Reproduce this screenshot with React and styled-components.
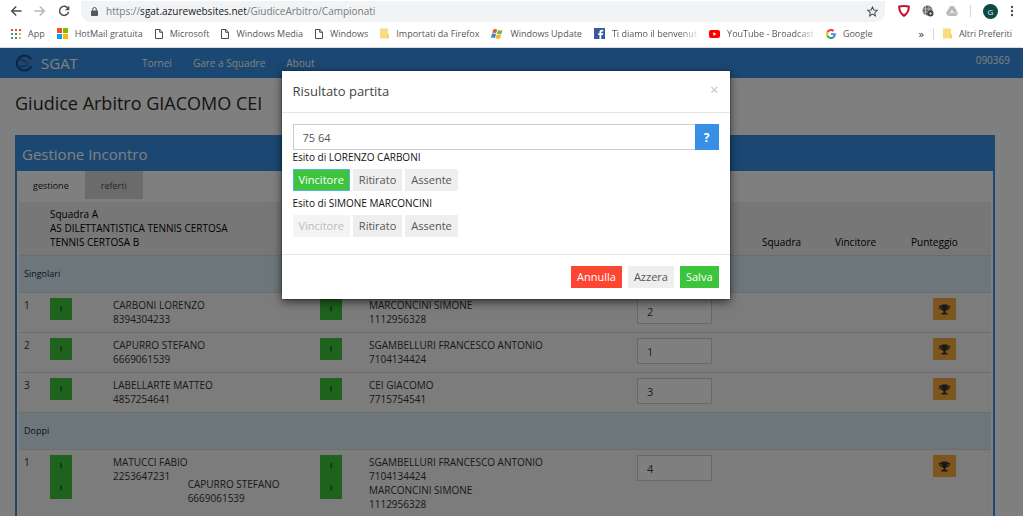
import React from "react";
import styled, { createGlobalStyle } from "styled-components";
import { FaTrophy } from "react-icons/fa";

const Global = createGlobalStyle`
  *, *::before, *::after { box-sizing: border-box; }
  html, body { margin: 0; height: 100%; }
  #root { height: 100%; }
  body, button, input, table { font-family: "Open Sans", "Noto Sans", sans-serif; }
  body { background: #fff; overflow: hidden; }
  button { margin: 0; padding: 0; border: 0; }
  a { color: inherit; text-decoration: none; }
`;

const BLUE = "#378fe6";
const GREEN = "#3cc43c";

const Browser = styled.div`
  display: flex;
  flex-direction: column;
  height: 100%;
`;

/* ---------- browser chrome ---------- */
const Toolbar = styled.div`
  display: flex;
  align-items: center;
  height: 22px;
  padding: 0 9px 0 10px;
`;
const NavButtons = styled.div`
  display: flex;
  gap: 12px;
  width: 71px;
`;
const ToolButton = styled.button`
  display: flex;
  background: none;
`;
const AddressBar = styled.div`
  flex: 1;
  display: flex;
  align-items: center;
  gap: 8px;
  height: 21px;
  padding: 0 7px 0 10px;
  border-radius: 0 0 10px 10px;
  background: #f1f3f4;
`;
const UrlText = styled.span`
  flex: 1;
  font-size: 10px;
  line-height: 16px;
  color: #777b80;
  b { font-weight: 400; color: #202124; }
`;
const Extensions = styled.div`
  display: flex;
  align-items: center;
  gap: 12px;
  padding-left: 13px;
`;
const Divider = styled.span`
  width: 1px;
  height: 12px;
  background: #d6d6d6;
`;
const Avatar = styled.button`
  width: 15px;
  height: 15px;
  border-radius: 50%;
  background: #0b4a45;
  color: #e6f2f0;
  font-size: 8px;
  line-height: 15px;
`;
const Bookmarks = styled.nav`
  display: flex;
  align-items: center;
  height: 26px;
  padding: 0 11px 2px;
  gap: 12px;
  border-bottom: 1px solid #dcdcdc;
`;
const Bookmark = styled.a`
  display: flex;
  align-items: center;
  gap: 7px;
  flex: none;
  font-size: 9px;
  line-height: 14px;
  color: #55585c;
  white-space: nowrap;
`;
const FadedLabel = styled.span`
  mask-image: linear-gradient(to right, #000 80%, rgba(0, 0, 0, 0.2));
`;
const BookmarksEnd = styled.div`
  display: flex;
  align-items: center;
  gap: 9px;
  margin-left: auto;
`;
const More = styled.button`
  background: none;
  font-size: 11px;
  line-height: 14px;
  color: #444;
`;

/* ---------- page ---------- */
const Viewport = styled.div`
  position: relative;
  flex: 1;
  min-height: 0;
  overflow: hidden;
`;
const SiteNav = styled.nav`
  display: flex;
  align-items: center;
  height: 30px;
  padding: 0 13px 0 15px;
  background: ${BLUE};
  color: #fff;
  font-size: 10px;
`;
const Brand = styled.a`
  display: flex;
  align-items: center;
  gap: 4px;
  width: 127px;
  font-size: 15px;
`;
const NavLinks = styled.div`
  flex: 1;
  display: flex;
  gap: 21px;
`;
const UserCode = styled.a`
  padding-bottom: 6px;
`;
const Content = styled.main`
  padding: 0 28px 0 15px;
`;
const PageTitle = styled.h1`
  margin: 0;
  padding: 12px 0 19px;
  font-size: 18px;
  line-height: 26px;
  font-weight: 400;
  color: #2a2a2a;
`;
const Panel = styled.section`
  border: 2px solid ${BLUE};
`;
const PanelTitle = styled.h2`
  margin: 0;
  padding: 0 5px;
  background: ${BLUE};
  color: #fff;
  font-size: 15px;
  line-height: 34px;
  font-weight: 400;
`;
const Tabs = styled.div`
  display: flex;
  margin-bottom: 3px;
`;
const Tab = styled.button`
  height: 28px;
  padding: 0 16px;
  font-size: 9px;
  color: ${(p) => (p.$active ? "#222" : "#555")};
  background: ${(p) => (p.$active ? "#fff" : "#d6d6d6")};
`;
const TableWrap = styled.div`
  padding: 0 2px;
`;
const Table = styled.table`
  width: 100%;
  table-layout: fixed;
  border-collapse: collapse;
  font-size: 10px;
  line-height: 14px;
  color: #333;
`;
const Col = styled.col`
  width: ${(p) => (p.$w ? `${p.$w}px` : "auto")};
`;
const HeadRow = styled.tr`
  height: 53px;
  background: #efefef;
`;
const Th = styled.th`
  padding: 5px 5px 6px;
  text-align: ${(p) => (p.$end ? "right" : "left")};
  padding-right: ${(p) => (p.$end ? 34 : 0)}px;
  vertical-align: bottom;
  font-weight: 500;
  color: #000;
  white-space: nowrap;
`;
const SectionRow = styled.tr`
  height: 37px;
  background: #d9edf7;
  border-top: 1px solid #d8d8d8;
`;
const SectionCell = styled.th`
  padding: 0 5px;
  text-align: left;
  font-size: 9px;
  font-weight: 400;
  color: #0c2c48;
`;
const Row = styled.tr`
  height: ${(p) => (p.$double ? 67 : 40)}px;
  background: #f8f8f8;
  border-top: 1px solid #dadada;
  border-bottom: 1px solid #dadada;
`;
const Td = styled.td`
  padding: 5px 0 0 5px;
  vertical-align: top;
  text-align: ${(p) => (p.$end ? "right" : "left")};
  padding-right: ${(p) => (p.$end ? 35 : 0)}px;
  white-space: nowrap;
`;
const SquareButton = styled.button`
  display: flex;
  align-items: center;
  justify-content: center;
  width: ${(p) => (p.$wide ? 23 : 22)}px;
  height: 22px;
  background: ${(p) => p.$color};
  color: #333;
`;
const EndAlign = styled.div`
  display: flex;
  justify-content: flex-end;
`;
const Players = styled.div`
  display: flex;
  flex-direction: ${(p) => (p.$stacked ? "column" : "row")};
`;
const Player = styled.div`
  margin-top: ${(p) => (p.$dropped ? 22 : 0)}px;
`;
const ScoreInput = styled.input`
  display: block;
  width: 75px;
  height: 26px;
  padding: 0 9px;
  border: 1px solid #d0d0d0;
  background: #fff;
  font-size: 11px;
  color: #444;
`;

/* ---------- dialog ---------- */
const Overlay = styled.div`
  position: absolute;
  inset: 0;
  display: flex;
  justify-content: center;
  align-items: flex-start;
  padding: 23px 12px 0 0;
  background: rgba(0, 0, 0, 0.5);
`;
const Dialog = styled.div`
  width: 448px;
  background: #fff;
  box-shadow: 0 3px 9px rgba(0, 0, 0, 0.6), 0 0 1px #000;
  color: #444;
`;
const DialogHeader = styled.header`
  display: flex;
  justify-content: space-between;
  align-items: flex-start;
  padding: 11px;
  border-bottom: 1px solid #e5e5e5;
`;
const DialogTitle = styled.h3`
  margin: 0;
  font-size: 13px;
  line-height: 19px;
  font-weight: 400;
`;
const Close = styled.button`
  background: none;
  color: #c4c4c4;
  font-size: 15px;
  line-height: 14px;
`;
const DialogBody = styled.div`
  padding: 11px 11px 12px;
`;
const InputGroup = styled.div`
  display: flex;
  height: 26px;
`;
const ResultInput = styled.input`
  flex: 1;
  min-width: 0;
  padding: 0 9px;
  border: 1px solid #ccc;
  border-right: 0;
  font-size: 11px;
  color: #555;
`;
const HelpButton = styled.button`
  width: 24px;
  background: ${BLUE};
  color: #fff;
  font-size: 12px;
  font-weight: 700;
`;
const Outcome = styled.fieldset`
  margin: 0 0 5px;
  padding: 0;
  border: 0;
`;
const OutcomeLabel = styled.legend`
  padding: 0 0 5px;
  font-size: 10px;
  line-height: 14px;
  font-weight: 500;
  color: #111;
`;
const Options = styled.div`
  display: flex;
  gap: 3px;
`;
const tones = {
  plain: ["#eeeeee", "#555"],
  success: [GREEN, "#fff"],
  danger: ["#fd4533", "#fff"],
};
const Button = styled.button`
  height: 22px;
  padding: 0 6px;
  font-size: 11px;
  line-height: 22px;
  background: ${(p) => tones[p.$tone || "plain"][0]};
  color: ${(p) => tones[p.$tone || "plain"][1]};
  box-shadow: ${(p) => (p.$focused ? "inset 0 0 0 1px #57b6d6" : "none")};
  &:disabled { background: #f4f4f4; color: #bbb; }
`;
const DialogFooter = styled.footer`
  display: flex;
  justify-content: flex-end;
  gap: 6px;
  padding: 11px;
  border-top: 1px solid #e5e5e5;
`;

/* ---------- icons ---------- */
const Icon = styled.svg`
  flex: none;
`;
const Svg = ({ w = 12, h = w, box = `0 0 ${w} ${h}`, children }) => (
  <Icon width={w} height={h} viewBox={box} aria-hidden="true">{children}</Icon>
);
const stroke = { fill: "none", stroke: "#4a4d51", strokeWidth: 1.5 };
const BackIcon = () => <Svg><path d="M11.5 6H2M6.2 1.5 1.7 6l4.5 4.5" {...stroke} /></Svg>;
const ForwardIcon = () => <Svg><path d="M.5 6H10M5.8 1.5 10.3 6l-4.5 4.5" {...stroke} stroke="#b5b7ba" /></Svg>;
const ReloadIcon = () => (
  <Svg><path d="M10 3.3A4.6 4.6 0 1 0 10.6 7" {...stroke} /><path d="M11.3.8v4.4H6.9z" fill="#4a4d51" /></Svg>
);
const LockIcon = () => (
  <Svg w={7} h={9}><rect y="3.5" width="7" height="5.5" rx=".7" fill="#55585c" /><path d="M1.7 4V2.3a1.8 1.8 0 0 1 3.6 0V4" {...stroke} strokeWidth="1" /></Svg>
);
const StarIcon = () => (
  <Svg w={11} box="0 0 12 12"><path d="m6 1 1.5 3.4 3.7.3-2.8 2.5.8 3.6L6 8.9l-3.2 1.9.8-3.6L.8 4.7l3.7-.3z" {...stroke} strokeWidth="1.1" /></Svg>
);
const ShieldIcon = () => (
  <Svg><path d="M1.200 1.600Q6 .6 10.800 1.600Q11 7.500 6 10.800Q1 7.500 1.200 1.600z" fill="#fff" stroke="#c5122c" strokeWidth="2" /></Svg>
);
const GlobeIcon = () => (
  <Svg>
    <circle cx="5.500" cy="5.500" r="5" fill="#666" />
    <path d="M1 4h9M1 7h9M3.500 1v9M7 1v9" stroke="#ccc" strokeWidth=".7" />
    <circle cx="8.500" cy="8.500" r="3" fill="#444" /><path d="M7 8.500h3M8.500 7v3" stroke="#ddd" strokeWidth=".7" />
  </Svg>
);
const DriveIcon = () => (
  <Svg><path d="M4.200 1h3.600L12 8l-1.800 3H1.800L0 8z" fill="#b9b9b9" /><path d="m6 4.500 1.800 3.200H4.200z" fill="#f4f4f4" /><path d="M1.800 11 4 7.800h8" stroke="#ddd" fill="none" strokeWidth=".8" /></Svg>
);
const DotsIcon = () => (
  <Svg w={4} h={12}><g fill="#4a4d51"><circle cx="2" cy="2" r="1.200" /><circle cx="2" cy="6" r="1.200" /><circle cx="2" cy="10" r="1.200" /></g></Svg>
);
const AppsIcon = () => (
  <Svg w={10}>
    {["#e2483d", "#e2483d", "#e2483d", "#45a25a", "#4b7fd8", "#e8b52e", "#45a25a", "#45a25a", "#e8b52e"].map((c, i) => (
      <rect key={i} x={(i % 3) * 4} y={Math.floor(i / 3) * 4} width="2" height="2" fill={c} />
    ))}
  </Svg>
);
const TilesIcon = () => (
  <Svg w={11}><rect width="5" height="5" fill="#f25022" /><rect x="6" width="5" height="5" fill="#7fba00" /><rect y="6" width="5" height="5" fill="#00a4ef" /><rect x="6" y="6" width="5" height="5" fill="#ffb900" /></Svg>
);
const PageIcon = () => (
  <Svg w={8} h={10}><path d="M.5.500h4.300l2.700 2.700v6.300h-7zM4.700.500v2.800h2.800" {...stroke} strokeWidth="1" /></Svg>
);
const FolderIcon = () => (
  <Svg w={9} h={11}><path d="M0 .5h8V6L9 7v3.500H0z" fill="#f9dc7c" /><path d="M8 6v4.500" stroke="#e6c25a" strokeWidth=".7" /></Svg>
);
const WindowsFlagIcon = () => (
  <Svg>
    <path d="M2.200 1.500C3.600.700 5 .800 6.200 1.500L5.200 5.300C4 4.700 2.700 4.600 1.200 5.300z" fill="#e2592b" />
    <path d="M7 1.900c1.400.800 2.800.800 4.500 0l-1 3.800c-1.600.800-3 .700-4.500 0z" fill="#7db23a" />
    <path d="M1 6.100C2.400 5.400 3.700 5.500 5 6.100L4 9.900C2.700 9.200 1.400 9.200 0 9.900z" fill="#3b82c9" />
    <path d="M5.700 6.500c1.500.800 2.900.800 4.500 0l-1 3.800c-1.600.800-3 .800-4.500 0z" fill="#f2b92c" />
  </Svg>
);
const FacebookIcon = () => (
  <Svg w={11}><rect width="11" height="11" fill="#3b5998" /><path d="M7.300 11V6.900H9l.2-1.700H7.300V4.300c0-.6.300-.9 1-.9h1V1.800H7.900C6.200 1.800 5.500 2.700 5.500 4v1.200H4.200v1.700h1.300V11z" fill="#fff" /></Svg>
);
const YoutubeIcon = () => (
  <Svg w={11} h={8}><rect width="11" height="8" rx="2" fill="#f00" /><path d="m4.300 2.200 3.200 1.800-3.200 1.800z" fill="#fff" /></Svg>
);
const GoogleIcon = () => (
  <Svg w={10} box="0 0 48 48">
    <path fill="#EA4335" d="M24 9.500c3.500 0 6.700 1.200 9.200 3.600l6.900-6.900C35.900 2.400 30.500 0 24 0 14.600 0 6.500 5.400 2.600 13.200l8 6.200C12.400 13.700 17.700 9.500 24 9.500z" />
    <path fill="#4285F4" d="M47 24.600c0-1.600-.2-3.100-.4-4.600H24v9h12.900c-.6 3-2.200 5.500-4.700 7.200l7.700 6C44.400 38 47 31.800 47 24.600z" />
    <path fill="#FBBC05" d="M10.500 28.600c-.5-1.500-.8-3-.8-4.600s.3-3.100.8-4.600l-8-6.200C.9 16.500 0 20.100 0 24s.9 7.500 2.600 10.800z" />
    <path fill="#34A853" d="M24 48c6.500 0 11.900-2.100 15.900-5.800l-7.700-6c-2.200 1.500-4.900 2.300-8.200 2.300-6.300 0-11.600-4.200-13.500-9.900l-8 6.200C6.500 42.600 14.600 48 24 48z" />
  </Svg>
);
const LogoIcon = () => (
  <Svg w={22} h={18}>
    <path d="M16 5.500A7.500 7.500 0 1 0 16.300 12" fill="none" stroke="#154a90" strokeWidth="2" />
    <path d="M3 7c3-3 6-1 8 1s3 3 0 4-5 0-8 1" fill="none" stroke="#2468b4" strokeWidth="1.800" />
    <path d="M9 8c3 2 7 0 12-2" fill="none" stroke="#8a6a92" strokeWidth="1.200" />
  </Svg>
);
const MarkIcon = () => (
  <Svg w={4} h={6}><path d="M1.500 0h1.200v2l.8.800-.8 1V5.500H1.500V3.500z" fill="#1c5a20" /></Svg>
);

/* ---------- content ---------- */
const bookmarks = [
  [AppsIcon, "App"],
  [TilesIcon, "HotMail gratuita"],
  [PageIcon, "Microsoft"],
  [PageIcon, "Windows Media"],
  [PageIcon, "Windows"],
  [FolderIcon, "Importati da Firefox"],
  [WindowsFlagIcon, "Windows Update"],
  [FacebookIcon, "Ti diamo il benvenut", true],
  [YoutubeIcon, "YouTube - Broadcast", true],
  [GoogleIcon, "Google"],
];
const singles = [
  { n: 1, a: [["CARBONI LORENZO", "8394304233"]], b: [["MARCONCINI SIMONE", "1112956328"]], score: 2 },
  { n: 2, a: [["CAPURRO STEFANO", "6669061539"]], b: [["SGAMBELLURI FRANCESCO ANTONIO", "7104134424"]], score: 1 },
  { n: 3, a: [["LABELLARTE MATTEO", "4857254641"]], b: [["CEI GIACOMO", "7715754541"]], score: 3 },
];
const doubles = [
  {
    n: 1,
    a: [["MATUCCI FABIO", "2253647231"], ["CAPURRO STEFANO", "6669061539"]],
    b: [["SGAMBELLURI FRANCESCO ANTONIO", "7104134424"], ["MARCONCINI SIMONE", "1112956328"]],
    score: 4,
  },
];

const Picks = ({ players }) =>
  players.map(([name]) => (
    <SquareButton key={name} $color={GREEN} aria-label={`Scegli ${name}`}><MarkIcon /></SquareButton>
  ));

const Match = ({ match, kind }) => (
  <Row $double={match.a.length > 1}>
    <Td>{match.n}</Td>
    <Td><Picks players={match.a} /></Td>
    <Td>
      <Players>
        {match.a.map(([name, code], i) => (
          <Player key={code} $dropped={i > 0}>{name}<br />{code}</Player>
        ))}
      </Players>
    </Td>
    <Td><Picks players={match.b} /></Td>
    <Td>
      <Players $stacked>
        {match.b.map(([name, code]) => <Player key={code}>{name}<br />{code}</Player>)}
      </Players>
    </Td>
    <Td><ScoreInput aria-label={`Ordine ${kind} ${match.n}`} defaultValue={match.score} /></Td>
    <Td /><Td />
    <Td $end>
      <EndAlign><SquareButton $wide $color="#faab3c" aria-label="Risultato"><FaTrophy size={11} /></SquareButton></EndAlign>
    </Td>
  </Row>
);

const OutcomeChoice = ({ player, won }) => (
  <Outcome>
    <OutcomeLabel>Esito di {player}</OutcomeLabel>
    <Options>
      <Button $tone={won ? "success" : "plain"} $focused={won} disabled={!won}>Vincitore</Button>
      <Button>Ritirato</Button>
      <Button>Assente</Button>
    </Options>
  </Outcome>
);

export default function App() {
  return (
    <Browser>
      <Global />
      <Toolbar>
        <NavButtons>
          <ToolButton aria-label="Indietro"><BackIcon /></ToolButton>
          <ToolButton aria-label="Avanti"><ForwardIcon /></ToolButton>
          <ToolButton aria-label="Ricarica"><ReloadIcon /></ToolButton>
        </NavButtons>
        <AddressBar>
          <LockIcon />
          <UrlText>https://<b>sgat.azurewebsites.net</b>/GiudiceArbitro/Campionati</UrlText>
          <ToolButton aria-label="Preferiti"><StarIcon /></ToolButton>
        </AddressBar>
        <Extensions>
          <ShieldIcon /><GlobeIcon /><DriveIcon />
          <Divider />
          <Avatar>G</Avatar>
          <ToolButton aria-label="Menu"><DotsIcon /></ToolButton>
        </Extensions>
      </Toolbar>
      <Bookmarks>
        {bookmarks.map(([Glyph, label, faded]) => (
          <Bookmark key={label} href="#">
            <Glyph />
            {faded ? <FadedLabel>{label}</FadedLabel> : label}
          </Bookmark>
        ))}
        <BookmarksEnd>
          <More>»</More>
          <Divider />
          <Bookmark href="#"><FolderIcon />Altri Preferiti</Bookmark>
        </BookmarksEnd>
      </Bookmarks>

      <Viewport>
        <SiteNav>
          <Brand href="#"><LogoIcon />SGAT</Brand>
          <NavLinks>
            <a href="#">Tornei</a>
            <a href="#">Gare a Squadre</a>
            <a href="#">About</a>
          </NavLinks>
          <UserCode href="#">090369</UserCode>
        </SiteNav>
        <Content>
          <PageTitle>Giudice Arbitro GIACOMO CEI</PageTitle>
          <Panel>
            <PanelTitle>Gestione Incontro</PanelTitle>
            <Tabs>
              <Tab $active>gestione</Tab>
              <Tab>referti</Tab>
            </Tabs>
            <TableWrap>
              <Table>
                <colgroup>
                  {[26, 63, 207, 49, 0, 125, 73, 76, 85].map((w, i) => <Col key={i} $w={w} />)}
                </colgroup>
                <thead>
                  <HeadRow>
                    <Th />
                    <Th colSpan={2}>Squadra A<br />AS DILETTANTISTICA TENNIS CERTOSA<br />TENNIS CERTOSA B</Th>
                    <Th colSpan={2} />
                    <Th />
                    <Th>Squadra</Th>
                    <Th>Vincitore</Th>
                    <Th $end>Punteggio</Th>
                  </HeadRow>
                </thead>
                <tbody>
                  <SectionRow><SectionCell colSpan={9}>Singolari</SectionCell></SectionRow>
                  {singles.map((m) => <Match key={m.n} match={m} kind="singolare" />)}
                  <SectionRow><SectionCell colSpan={9}>Doppi</SectionCell></SectionRow>
                  {doubles.map((m) => <Match key={m.n} match={m} kind="doppio" />)}
                </tbody>
              </Table>
            </TableWrap>
          </Panel>
        </Content>

        <Overlay>
          <Dialog role="dialog" aria-labelledby="dialog-title">
            <DialogHeader>
              <DialogTitle id="dialog-title">Risultato partita</DialogTitle>
              <Close aria-label="Chiudi">×</Close>
            </DialogHeader>
            <DialogBody>
              <InputGroup>
                <ResultInput aria-label="Risultato" defaultValue="75 64" />
                <HelpButton>?</HelpButton>
              </InputGroup>
              <OutcomeChoice player="LORENZO CARBONI" won />
              <OutcomeChoice player="SIMONE MARCONCINI" />
            </DialogBody>
            <DialogFooter>
              <Button $tone="danger">Annulla</Button>
              <Button>Azzera</Button>
              <Button $tone="success">Salva</Button>
            </DialogFooter>
          </Dialog>
        </Overlay>
      </Viewport>
    </Browser>
  );
}
